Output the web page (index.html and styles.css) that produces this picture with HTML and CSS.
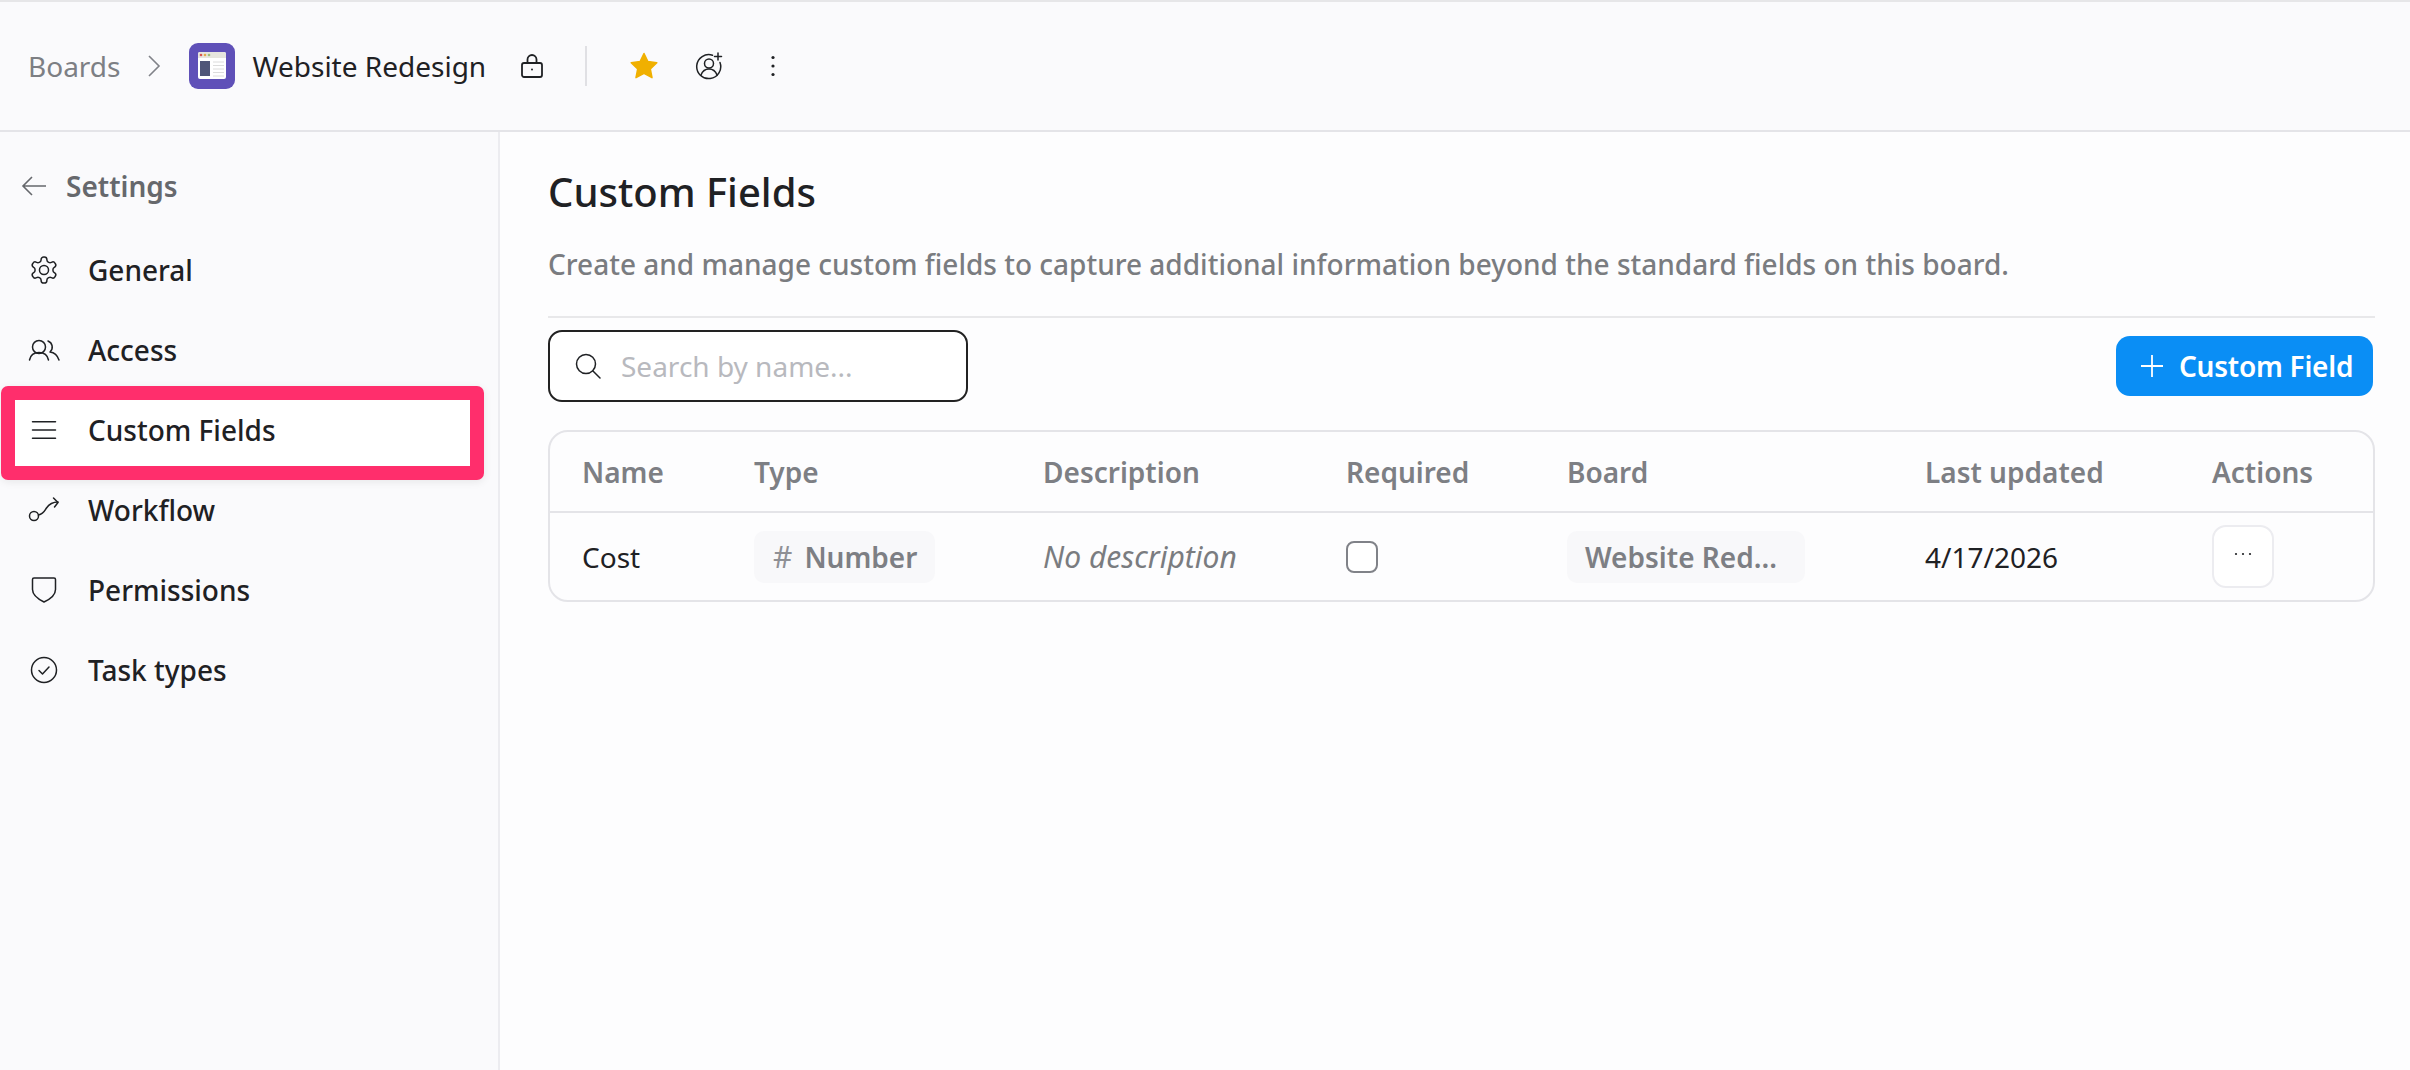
FILE: index.html
```html
<!DOCTYPE html>
<html lang="en">
<head>
    <meta charset="UTF-8">
    <title>Custom Fields</title>
    <link rel="stylesheet" href="styles.css">
</head>
<body>
    <header class="topbar">
        <span class="crumb">Boards</span>
        <svg class="crumb-chevron" viewBox="0 0 14 22"><path d="M2 1l10 10-10 10"/></svg>
        <svg class="board-logo" viewBox="0 0 46 46">
            <rect width="46" height="46" rx="9" fill="#5f50b8"/>
            <rect x="9" y="9" width="28" height="27" rx="2" fill="#fff"/>
            <path d="M9 11a2 2 0 0 1 2-2h24a2 2 0 0 1 2 2v4H9z" fill="#e6e5de"/>
            <circle cx="12" cy="12" r="1.3" fill="#d9534f"/>
            <circle cx="16" cy="12" r="1.3" fill="#e5a84b"/>
            <circle cx="20" cy="12" r="1.3" fill="#9cbf7d"/>
            <rect x="11" y="18" width="10" height="15" fill="#4f5578"/>
            <path d="M24 19h11M24 22.5h11M24 26h11M24 29.5h11M24 33h11" stroke="#dcdcdc" stroke-width="1"/>
        </svg>
        <span class="board-name">Website Redesign</span>
        <svg class="icon lock-icon" viewBox="0 0 22 24"><path d="M6.5 9V5.5a4.5 4.5 0 0 1 9 0V9"/><rect x="1" y="9" width="20" height="14" rx="2"/><circle class="dot" cx="11" cy="15.500" r="1"/></svg>
        <span class="topbar-divider"></span>
        <svg class="star-icon" viewBox="0 0 30 28"><path d="M15 1.500l3.900 8.100 8.900 1.200-6.500 6.100 1.700 8.800-8-4.300-8 4.300 1.700-8.800-6.500-6.100 8.900-1.200z"/></svg>
        <svg class="icon user-add-icon" viewBox="0 0 28 28"><path d="M17.500 3.200A12 12 0 1 0 25 10.500"/><circle cx="14" cy="11.500" r="4.500"/><path d="M6 23c1.500-4 4.500-6 8-6s6.500 2 8 6"/><path d="M23 1v7M19.500 4.500h7"/></svg>
        <svg class="kebab-icon" viewBox="0 0 6 22"><circle cx="3" cy="2.500" r="1.600"/><circle cx="3" cy="11" r="1.600"/><circle cx="3" cy="19.500" r="1.600"/></svg>
    </header>

    <div class="layout">
        <aside class="sidebar">
            <div class="sidebar-back">
                <svg class="back-arrow" viewBox="0 0 26 22"><path d="M25 11H2M11 2l-9 9 9 9"/></svg>
                <span>Settings</span>
            </div>
            <nav class="nav">
                <a class="nav-item">
                    <svg class="icon" viewBox="0 0 32 28"><g transform="translate(16 14) scale(1.3) translate(-12 -12)"><path d="M12.220 2h-.44a2 2 0 0 0-2 2v.18a2 2 0 0 1-1 1.730l-.43.25a2 2 0 0 1-2 0l-.15-.08a2 2 0 0 0-2.730.73l-.22.38a2 2 0 0 0 .73 2.730l.15.1a2 2 0 0 1 1 1.720v.51a2 2 0 0 1-1 1.740l-.15.09a2 2 0 0 0-.73 2.730l.22.38a2 2 0 0 0 2.730.73l.15-.08a2 2 0 0 1 2 0l.43.25a2 2 0 0 1 1 1.730V20a2 2 0 0 0 2 2h.44a2 2 0 0 0 2-2v-.18a2 2 0 0 1 1-1.730l.43-.25a2 2 0 0 1 2 0l.15.08a2 2 0 0 0 2.730-.73l.22-.39a2 2 0 0 0-.73-2.730l-.15-.08a2 2 0 0 1-1-1.740v-.5a2 2 0 0 1 1-1.740l.15-.09a2 2 0 0 0 .73-2.730l-.22-.38a2 2 0 0 0-2.730-.73l-.15.08a2 2 0 0 1-2 0l-.43-.25a2 2 0 0 1-1-1.730V4a2 2 0 0 0-2-2z"/><circle cx="12" cy="12" r="3.500"/></g></svg>
                    <span>General</span>
                </a>
                <a class="nav-item">
                    <svg class="icon" viewBox="0 0 32 28"><circle cx="11" cy="11" r="6.500"/><path d="M1.500 24c1-5 5-7.500 9.500-7.500s8.500 2.500 9.500 7.500"/><path d="M20 5a6.500 6.500 0 0 1 2 11c4 .5 7.500 3.500 9 8"/></svg>
                    <span>Access</span>
                </a>
                <a class="nav-item active">
                    <svg class="icon" viewBox="0 0 32 28"><path d="M4.500 5.700h23M4.500 14h23M4.500 22.300h23"/></svg>
                    <span>Custom Fields</span>
                </a>
                <a class="nav-item">
                    <svg class="icon" viewBox="0 0 32 28"><circle cx="6" cy="20" r="4.500"/><path d="M10.500 19c5-1 6-4 8-7s6-6 11.500-6"/><path d="M25.500 2l4.500 4.500-3.500 4.500"/></svg>
                    <span>Workflow</span>
                </a>
                <a class="nav-item">
                    <svg class="icon" viewBox="0 0 32 28"><path d="M6 2h20a1.500 1.500 0 0 1 1.500 1.500v10c0 6-5 9.500-11.500 12.500-6-3-11.500-6.500-11.500-12.500v-10A1.500 1.500 0 0 1 6 2z"/></svg>
                    <span>Permissions</span>
                </a>
                <a class="nav-item">
                    <svg class="icon" viewBox="0 0 32 28"><circle cx="16" cy="14" r="12.500"/><path d="M11 14.500l3.500 3.500 6.500-7"/></svg>
                    <span>Task types</span>
                </a>
            </nav>
        </aside>

        <main class="content">
            <h1 class="page-title">Custom Fields</h1>
            <p class="page-desc">Create and manage custom fields to capture additional information beyond the standard fields on this board.</p>

            <div class="toolbar">
                <label class="search">
                    <svg class="icon search-icon" viewBox="0 0 26 26"><circle cx="11" cy="11" r="9.500"/><path d="M18 18l7 7"/></svg>
                    <input type="text" placeholder="Search by name...">
                </label>
                <button class="add-btn">
                    <svg class="plus-icon" viewBox="0 0 24 24"><path d="M12 1v22M1 12h22"/></svg>
                    Custom Field
                </button>
            </div>

            <div class="table-wrap">
                <table class="fields-table">
                    <colgroup>
                        <col class="col-name"><col class="col-type"><col class="col-desc"><col class="col-req"><col class="col-board"><col class="col-updated"><col class="col-actions">
                    </colgroup>
                    <thead>
                        <tr>
                            <th>Name</th>
                            <th>Type</th>
                            <th>Description</th>
                            <th>Required</th>
                            <th>Board</th>
                            <th>Last updated</th>
                            <th>Actions</th>
                        </tr>
                    </thead>
                    <tbody>
                        <tr>
                            <td>Cost</td>
                            <td><span class="chip"><span class="hash">#</span>Number</span></td>
                            <td class="no-desc">No description</td>
                            <td><span class="checkbox"></span></td>
                            <td><span class="chip chip-board">Website Red...</span></td>
                            <td>4/17/2026</td>
                            <td>
                                <button class="row-menu">
                                    <svg viewBox="0 0 18 4"><circle cx="2" cy="2" r="1.100"/><circle cx="9" cy="2" r="1.100"/><circle cx="16" cy="2" r="1.100"/></svg>
                                </button>
                            </td>
                        </tr>
                    </tbody>
                </table>
            </div>
        </main>
    </div>
</body>
</html>
```

FILE: styles.css
```css
* {
    box-sizing: border-box;
}

html, body {
    height: 100%;
}

body {
    margin: 0;
    font-family: "Noto Sans", sans-serif;
    font-size: 28px;
    color: #1f2124;
    background-color: #fafafc;
    border-top: 2px solid #e6e6e8;
    display: flex;
    flex-direction: column;
    overflow: hidden;
}

svg {
    flex: none;
}

.icon {
    width: 28px;
    height: 28px;
    fill: none;
    stroke: #1f2124;
    stroke-width: 1.5;
    stroke-linecap: round;
    stroke-linejoin: round;
}

.icon * {
    vector-effect: non-scaling-stroke;
}

/* top bar */
.topbar {
    height: 130px;
    flex: none;
    display: flex;
    align-items: center;
    padding-left: 28px;
    border-bottom: 2px solid #e4e4e8;
}

.crumb {
    color: #7d7f84;
}

.crumb-chevron {
    width: 14px;
    height: 22px;
    margin: 0 28px 0 27px;
    fill: none;
    stroke: #808288;
    stroke-width: 1.6;
}

.board-logo {
    width: 46px;
    height: 46px;
}

.board-name {
    margin-left: 17px;
}

.lock-icon {
    width: 22px;
    height: 24px;
    margin-left: 35px;
    stroke-width: 1.8;
}

.lock-icon .dot {
    fill: #1f2124;
    stroke: none;
}

.topbar-divider {
    width: 2px;
    height: 40px;
    margin: 0 42px 0 42px;
    background-color: #e0e0e4;
}

.star-icon {
    width: 30px;
    height: 28px;
    fill: #f0b000;
    stroke: #f0b000;
    stroke-width: 1.5;
    stroke-linejoin: round;
}

.user-add-icon {
    margin-left: 36px;
}

.kebab-icon {
    width: 6px;
    height: 22px;
    margin-left: 47px;
    fill: #1f2124;
}

/* page */
.layout {
    flex: 1;
    display: flex;
    min-height: 0;
}

.sidebar {
    width: 500px;
    flex: none;
    border-right: 2px solid #ececf0;
}

.sidebar-back {
    height: 72px;
    margin-top: 18px;
    display: flex;
    align-items: center;
    padding-left: 21px;
    gap: 19px;
    color: #66686c;
    font-weight: 600;
}

.back-arrow {
    width: 26px;
    height: 22px;
    fill: none;
    stroke: #66686c;
    stroke-width: 1.6;
}

.nav {
    margin-top: 8px;
}

.nav-item {
    height: 80px;
    display: flex;
    align-items: center;
    gap: 28px;
    padding-left: 28px;
    font-weight: 500;
}

.nav-item .icon {
    width: 32px;
}

/* pink highlight box sits a little lower than the row it marks */
.nav-item.active {
    height: 94px;
    margin: -4px 14px -10px 1px;
    padding: 0 0 6px 13px;
    border: 14px solid #ff2e6c;
    border-radius: 7px;
    background-color: #fff;
    box-shadow: 0 2px 8px rgba(0, 0, 0, 0.08);
}

.content {
    flex: 1;
    background-color: #fdfdfe;
    padding: 0 35px 0 48px;
}

.page-title {
    margin: 33px 0 0;
    font-size: 40px;
    line-height: 54px;
    font-weight: 500;
}

.page-desc {
    margin: 26px 0 0;
    padding-bottom: 33px;
    line-height: 38px;
    font-weight: 500;
    color: #7a7c80;
    border-bottom: 2px solid #e8e8ea;
}

.toolbar {
    display: flex;
    align-items: center;
    justify-content: space-between;
    margin-top: 12px;
    padding-right: 2px;
}

.search {
    width: 420px;
    height: 72px;
    display: flex;
    align-items: center;
    gap: 20px;
    padding-left: 25px;
    border: 2px solid #222;
    border-radius: 14px;
    background-color: #fff;
}

.search-icon {
    width: 26px;
    height: 26px;
}

.search input {
    flex: 1;
    min-width: 0;
    padding: 0;
    border: none;
    outline: none;
    background: none;
    font-family: inherit;
    font-size: 28px;
    color: #1f2124;
}

.search input::placeholder {
    color: #b8b9be;
}

.add-btn {
    height: 60px;
    width: 257px;
    display: flex;
    align-items: center;
    gap: 15px;
    padding: 0 0 0 24px;
    border: none;
    border-radius: 14px;
    background-color: #0a8ef5;
    color: #fff;
    font-family: inherit;
    font-size: 28px;
    font-weight: 600;
    letter-spacing: -0.25px;
    cursor: pointer;
}

.plus-icon {
    width: 24px;
    height: 24px;
    fill: none;
    stroke: #fff;
    stroke-width: 1.8;
}

/* table */
.table-wrap {
    margin-top: 28px;
    border: 2px solid #e4e4e8;
    border-radius: 20px;
}

.fields-table {
    width: 100%;
    table-layout: fixed;
    border-collapse: collapse;
}

.col-name { width: 172px; }
.col-type { width: 289px; }
.col-desc { width: 303px; }
.col-req { width: 221px; }
.col-board { width: 358px; }
.col-updated { width: 287px; }

th, td {
    padding: 0 0 0 32px;
    text-align: left;
}

th {
    height: 80px;
    font-weight: 600;
    color: #7d7f84;
    border-bottom: 2px solid #e4e4e8;
}

td {
    height: 88px;
}

.chip {
    display: inline-flex;
    align-items: center;
    height: 52px;
    padding: 0 18px 0 19px;
    border-radius: 10px;
    background-color: #f8f8fa;
    color: #7d7f84;
    font-weight: 600;
    vertical-align: middle;
}

.hash {
    margin-right: 12px;
    font-size: 30px;
    font-weight: 400;
    color: #8f9095;
}

.chip-board {
    width: 238px;
    padding-left: 18px;
}

.no-desc {
    font-size: 30px;
    font-style: italic;
    color: #7a7c80;
}

.checkbox {
    display: block;
    width: 32px;
    height: 32px;
    border: 2px solid #808288;
    border-radius: 8px;
    background-color: #fff;
}

.row-menu {
    display: flex;
    align-items: center;
    justify-content: center;
    width: 62px;
    height: 63px;
    padding: 0 0 6px;
    border: 2px solid #ececf0;
    border-radius: 14px;
    background-color: #fff;
    cursor: pointer;
}

.row-menu svg {
    width: 18px;
    height: 4px;
    fill: #1f2124;
}
```
